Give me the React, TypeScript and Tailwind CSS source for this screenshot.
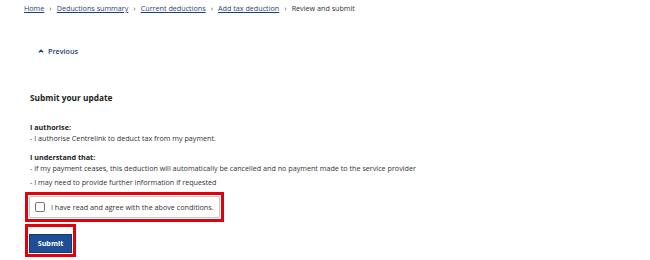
export default function App() {
  const crumbs = ["Home", "Deductions summary", "Current deductions", "Add tax deduction"];
  return (
    <div
      className="w-[650px] h-[260px] bg-white text-[#333] overflow-hidden"
      style={{ fontFamily: '"Open Sans", "Noto Sans", sans-serif' }}
    >
      <nav className="flex items-center pl-[24px] pt-[3px] text-[7.2px] leading-[10px] whitespace-nowrap">
        {crumbs.map((c) => (
          <span key={c} className="flex items-center">
            <a className="text-[#1f3f7a] underline">{c}</a>
            <span className="mx-[5px] text-[#555] text-[8px]">›</span>
          </span>
        ))}
        <span className="text-[#333]">Review and submit</span>
      </nav>

      <div className="pl-[38px] mt-[33px] flex items-center gap-[4px] text-[7.2px] leading-[10px] text-[#1f3f7a] font-semibold">
        <svg width="6" height="4" viewBox="0 0 6 4" className="mt-[-1px]">
          <path d="M0.8 3.4 L3 1.2 L5.2 3.4" fill="none" stroke="#1f3f7a" strokeWidth="1.3" />
        </svg>
        <span>Previous</span>
      </div>

      <div className="pl-[30px]">
        <h2 className="mt-[36px] text-[8.3px] leading-[12px] font-bold text-[#222]">Submit your update</h2>

        <div className="mt-[18px] text-[7.2px] leading-[11px]">
          <p className="font-bold text-[#222]">I authorise:</p>
          <p>- I authorise Centrelink to deduct tax from my payment.</p>
        </div>

        <div className="mt-[8px] text-[7.2px] leading-[11px]">
          <p className="font-bold text-[#222]">I understand that:</p>
          <p>- if my payment ceases, this deduction will automatically be cancelled and no payment made to the service provider</p>
          <p className="mt-[3px]">- I may need to provide further information if requested</p>
        </div>

        <div className="ml-[-5px] mt-[4px] w-[199px] border-[3px] border-[#e3000b] p-[1px]">
          <label className="flex items-center gap-[6px] h-[22px] border border-[#c8c8c8] rounded-[2px] pl-[5px] text-[7.2px] whitespace-nowrap">
            <span className="w-[10px] h-[10px] border border-[#777] rounded-[2px] bg-white" />
            <span>I have read and agree with the above conditions.</span>
          </label>
        </div>

        <div className="ml-[-5px] mt-[2px] w-[51px] border-[3px] border-[#e3000b] p-[1px]">
          <button className="w-full h-[19px] bg-[#1e4f94] border border-[#163a70] text-white text-[7.2px] font-bold">
            Submit
          </button>
        </div>
      </div>
    </div>
  );
}
